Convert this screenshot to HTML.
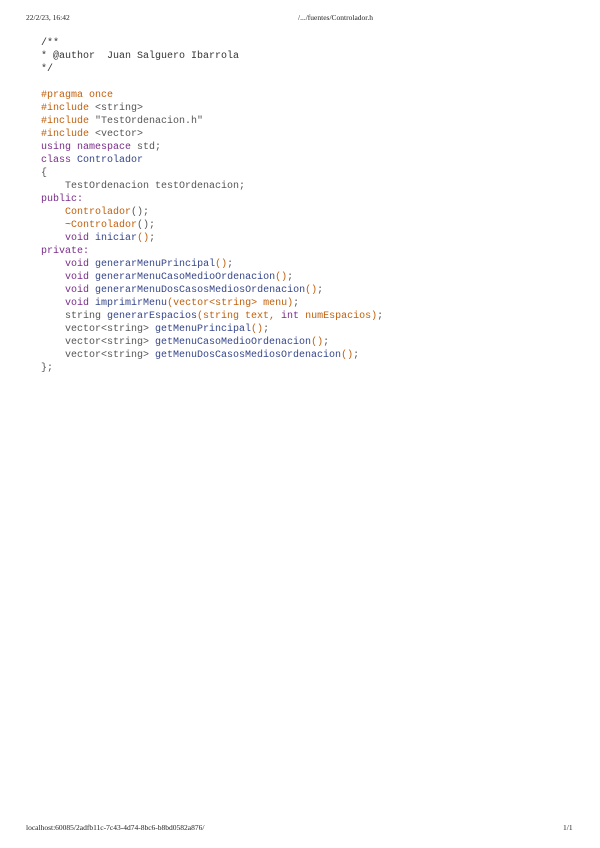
<!DOCTYPE html>
<html><head><meta charset="utf-8"><style>
html,body{margin:0;padding:0;background:#fff;width:600px;height:848px;overflow:hidden;position:relative}
.h{position:absolute;font-family:"Liberation Serif",serif;font-size:7.5px;color:#222;white-space:nowrap}
pre{position:absolute;left:41px;top:37px;margin:0;font-family:"Liberation Mono",monospace;font-size:10px;line-height:13px;color:#555}
.c{color:#333}.p{color:#c0600e}.k{color:#7a2c8a}.f{color:#36468a}.o{color:#c0600e}
</style></head><body>
<div class="h" style="left:26px;top:13px">22/2/23, 16:42</div>
<div class="h" style="left:298px;top:13px">/.../fuentes/Controlador.h</div>
<div class="h" style="left:26px;top:823px">localhost:60085/2adfb11c-7c43-4d74-8bc6-b8bd0582a876/</div>
<div class="h" style="left:563px;top:823px">1/1</div>
<pre><span class="c">/**
* @author  Juan Salguero Ibarrola
*/</span>

<span class="p">#pragma once</span>
<span class="p">#include</span> &lt;string&gt;
<span class="p">#include</span> "TestOrdenacion.h"
<span class="p">#include</span> &lt;vector&gt;
<span class="k">using namespace</span> std;
<span class="k">class</span> <span class="f">Controlador</span>
{
    TestOrdenacion testOrdenacion;
<span class="k">public:</span>
    <span class="o">Controlador</span>();
    ~<span class="o">Controlador</span>();
    <span class="k">void</span> <span class="f">iniciar</span><span class="o">()</span>;
<span class="k">private:</span>
    <span class="k">void</span> <span class="f">generarMenuPrincipal</span><span class="o">()</span>;
    <span class="k">void</span> <span class="f">generarMenuCasoMedioOrdenacion</span><span class="o">()</span>;
    <span class="k">void</span> <span class="f">generarMenuDosCasosMediosOrdenacion</span><span class="o">()</span>;
    <span class="k">void</span> <span class="f">imprimirMenu</span><span class="o">(vector&lt;string&gt; menu)</span>;
    string <span class="f">generarEspacios</span><span class="o">(string text, <span class="k">int</span> numEspacios)</span>;
    vector&lt;string&gt; <span class="f">getMenuPrincipal</span><span class="o">()</span>;
    vector&lt;string&gt; <span class="f">getMenuCasoMedioOrdenacion</span><span class="o">()</span>;
    vector&lt;string&gt; <span class="f">getMenuDosCasosMediosOrdenacion</span><span class="o">()</span>;
};</pre>
</body></html>
